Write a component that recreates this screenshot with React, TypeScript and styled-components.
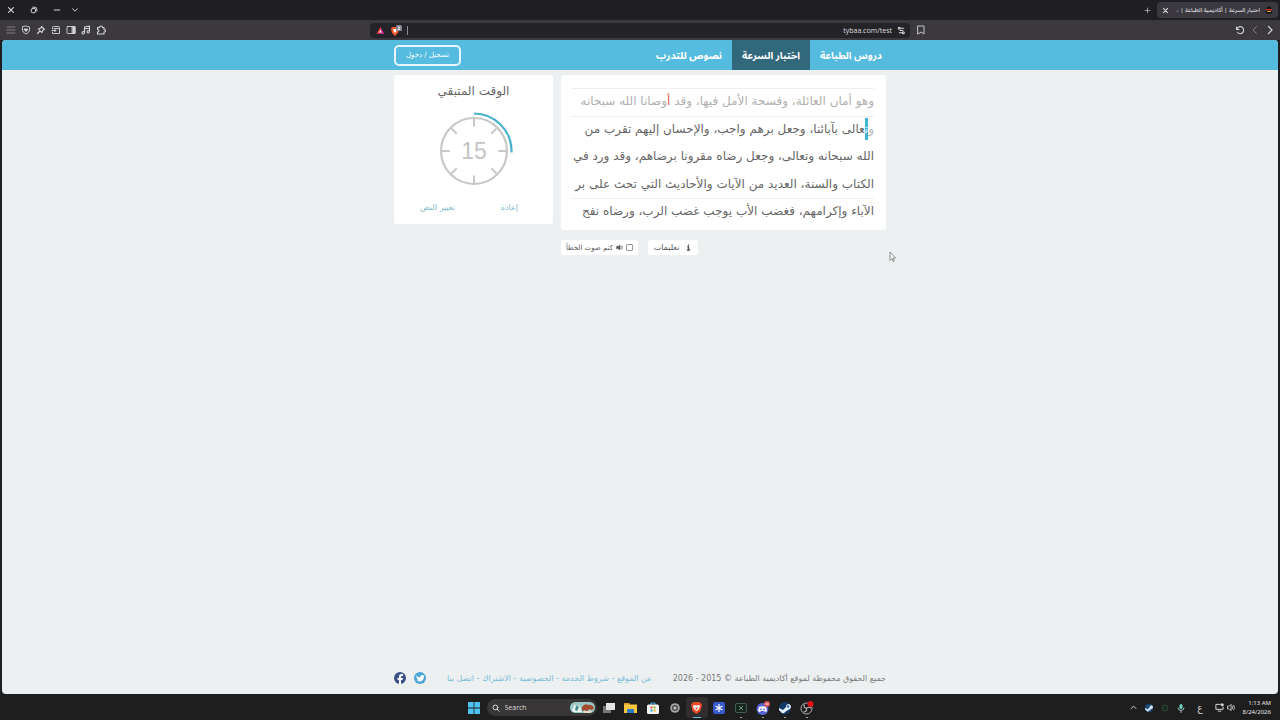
import React from "react";
import styled, { createGlobalStyle, css } from "styled-components";

const sans = `"Liberation Sans", "DejaVu Sans", sans-serif`;
const arabic = `"Noto Sans Arabic", "Noto Kufi Arabic", "Noto Sans", "DejaVu Sans", sans-serif`;
const kufi = `"DejaVu Sans", sans-serif`;

const GlobalStyle = createGlobalStyle`
  * { box-sizing: border-box; }
  html, body { margin: 0; background: #1f1e23; }
  body { font-family: ${sans}; font-size: 8px; color: #6c6c6c; }
  button, input { font: inherit; color: inherit; background: none; border: 0; padding: 0; margin: 0; }
  a { text-decoration: none; color: inherit; }
  svg { display: block; flex: none; }
`;

const Screen = styled.div`
  min-height: 100vh;
  display: flex;
  flex-direction: column;
  position: relative;
`;

const TitleBar = styled.div`
  height: 20px;
  display: flex;
  align-items: center;
  justify-content: space-between;
  background: #1f1e23;
  color: #d4d4d6;
`;

const WindowControls = styled.div`
  display: flex;
  padding-left: 1px;
`;

const ControlButton = styled.button<{ $w?: number }>`
  display: flex;
  align-items: center;
  justify-content: center;
  width: ${(p) => p.$w ?? 20}px;
  height: 20px;
`;

const TabStrip = styled.div`
  display: flex;
  align-items: center;
  padding-right: 2px;
`;

const Tab = styled.div`
  display: flex;
  align-items: center;
  gap: 5px;
  width: 121px;
  height: 16px;
  padding: 0 5px;
  border-radius: 4px;
  background: #3b393f;
`;

const TabTitle = styled.span`
  flex: 1;
  min-width: 0;
  white-space: nowrap;
  direction: rtl;
  font: 6px/14px ${arabic};
  color: #ededee;
`;

const Faded = styled.span`
  color: #8d8c91;
`;

const Toolbar = styled.div`
  height: 20px;
  display: grid;
  grid-template-columns: 1fr minmax(0, 540px) 1fr;
  align-items: center;
  background: #3b393e;
  color: #d4d4d6;
`;

const ToolGroup = styled.div<{ $spread?: boolean }>`
  display: flex;
  align-items: center;
  padding: 0 3px;
  ${(p) => p.$spread && css`justify-content: space-between;`}
`;

const History = styled.div`
  display: flex;
`;

const Tool = styled.button<{ $dim?: boolean }>`
  display: flex;
  align-items: center;
  justify-content: center;
  width: 15px;
  height: 16px;
  opacity: ${(p) => (p.$dim ? 0.5 : 1)};
`;

const AddressBar = styled.div`
  display: flex;
  align-items: center;
  gap: 5px;
  height: 15px;
  padding: 0 4px 0 6px;
  border-radius: 4px;
  background: #242328;
`;

const AddressInput = styled.input`
  flex: 1;
  min-width: 0;
  height: 9px;
  border-left: 1px solid #8b8a90;
  text-align: right;
  font: 7px/9px "Open Sans", ${sans};
  color: #dededf;
  outline: none;
`;

const Page = styled.div`
  flex: 1;
  display: flex;
  flex-direction: column;
  margin: 0 2px 1px;
  border-radius: 4px;
  overflow: hidden;
  background: #ecf0f1;
  font-family: ${kufi};
`;

const SiteHeader = styled.header`
  background: #55bcdf;
`;

const Container = styled.div`
  width: 100%;
  max-width: 492px;
  margin: 0 auto;
  display: flex;
  justify-content: space-between;
`;

const HeaderRow = styled(Container)`
  height: 30px;
  align-items: center;
`;

const LoginButton = styled.button`
  width: 67px;
  height: 21px;
  border: 2px solid #e6f6fc;
  border-radius: 5px;
  font-size: 7px;
  line-height: 15px;
  color: #fff;
`;

const Nav = styled.nav`
  display: flex;
  direction: rtl;
`;

const NavLink = styled.a<{ $active?: boolean }>`
  display: flex;
  align-items: center;
  justify-content: center;
  height: 30px;
  padding: 0 10px;
  font-family: ${arabic};
  font-size: 10px;
  font-weight: 700;
  white-space: nowrap;
  color: #fff;
  background: ${(p) => (p.$active ? "#32687c" : "none")};
  &:first-child { padding-right: 4px; }
`;

const Main = styled(Container)`
  padding-top: 5px;
  gap: 8px;
  align-items: flex-start;
`;

const TimerCard = styled.section`
  flex: none;
  width: 159px;
  height: 149px;
  display: flex;
  flex-direction: column;
  align-items: center;
  background: #fff;
  border-radius: 3px;
`;

const TimerTitle = styled.h2`
  margin: 0;
  padding-top: 4px;
  font-size: 12px;
  line-height: 24px;
  font-weight: 400;
  color: #666;
`;

const Dial = styled.svg`
  margin-top: 8px;
`;

const TimerActions = styled.div`
  width: 100%;
  display: flex;
  justify-content: space-between;
  padding: 10px 35px 0 26px;
`;

const TextButton = styled.button`
  font-size: 8px;
  line-height: 14px;
  color: #7cb9cb;
`;

const Column = styled.div`
  flex: 1;
  min-width: 0;
  direction: rtl;
`;

const TextCard = styled.section`
  height: 155px;
  padding: 13px 12px 4px 10px;
  background: #fff;
  border-radius: 3px;
`;

const Lines = styled.div`
  display: grid;
  grid-auto-rows: 1fr;
  height: 138px;
`;

const Line = styled.p<{ $rule?: boolean; $done?: boolean }>`
  margin: 0;
  border-top: 1px solid ${(p) => (p.$rule ? "#efefef" : "transparent")};
  font-size: 12px;
  line-height: 25px;
  white-space: nowrap;
  color: ${(p) => (p.$done ? "#b0b0b0" : "#666")};
`;

const Typed = styled.span`
  color: #b8b8b8;
`;
const Wrong = styled.span`
  color: #d9534f;
`;
const Current = styled.span`
  padding: 4px 0;
  color: #fff;
  background: #3fb4d4;
`;

const OptionRow = styled.div`
  display: flex;
  direction: ltr;
  gap: 10px;
  padding-top: 10px;
`;

const Chip = styled.label<{ $w: number }>`
  width: ${(p) => p.$w}px;
  height: 15px;
  display: flex;
  align-items: center;
  justify-content: center;
  gap: 3px;
  direction: rtl;
  white-space: nowrap;
  background: #fff;
  border-radius: 2px;
  font-size: 7px;
  line-height: 14px;
  color: #555;
`;

const InfoChip = styled(Chip)`
  gap: 6px;
  font-size: 8px;
`;

const Checkbox = styled.input`
  appearance: none;
  width: 7px;
  height: 7px;
  border: 1px solid #999;
  border-radius: 1px;
  background: #fff;
`;

const SiteFooter = styled.footer`
  margin-top: auto;
  padding-bottom: 7px;
`;

const FooterRow = styled(Container)`
  align-items: center;
  height: 18px;
  font-size: 8px;
`;

const Social = styled.div`
  display: flex;
  gap: 8px;
`;

const FooterLinks = styled.div`
  direction: rtl;
  white-space: nowrap;
  color: #79bcd6;
`;

const Copyright = styled.div`
  direction: rtl;
  white-space: nowrap;
  color: #7a7a7a;
`;

const TaskBar = styled.div`
  height: 25px;
  display: grid;
  grid-template-columns: 1fr auto 1fr;
  align-items: center;
  background: #1f1e1f;
  color: #e8e8e8;
`;

const Apps = styled.div`
  grid-column: 2;
  display: flex;
  align-items: center;
`;

const AppButton = styled.button<{ $active?: boolean; $open?: boolean }>`
  width: 22px;
  height: 21px;
  position: relative;
  display: flex;
  align-items: center;
  justify-content: center;
  border-radius: 3px;
  background: ${(p) => (p.$active ? "#302d2c" : "none")};
  ${(p) =>
    (p.$open || p.$active) &&
    css`
      &::after {
        content: "";
        position: absolute;
        bottom: 0;
        width: ${p.$active ? 8 : 2}px;
        height: 1px;
        background: ${p.$active ? "#6cc0e6" : "#a0a0a0"};
      }
    `}
`;

const Search = styled.label`
  width: 110px;
  height: 17px;
  margin: 0 1px 0 2px;
  display: flex;
  align-items: center;
  gap: 5px;
  padding: 0 2px 0 5px;
  border-radius: 9px;
  background: #383637;
`;

const SearchInput = styled.input`
  flex: 1;
  min-width: 0;
  font: 7px/12px "Open Sans", ${sans};
  &::placeholder { color: #d8d8d8; opacity: 1; }
`;

const Tray = styled.div`
  grid-column: 3;
  display: flex;
  justify-content: flex-end;
  align-items: center;
  padding-right: 9px;
`;

const TrayItem = styled.span<{ $w?: number }>`
  width: ${(p) => p.$w ?? 16}px;
  display: flex;
  justify-content: center;
  font: 9px/14px ${arabic};
`;

const Time = styled.time`
  width: 36px;
  text-align: right;
  white-space: nowrap;
  font: 6px/9px "Noto Sans", ${sans};
`;

const Pointer = styled.svg`
  position: absolute;
  left: 889px;
  top: 251px;
`;

function Ico({ size = 10, children, fill = "none", sw = 1.8 }: { size?: number; children: React.ReactNode; fill?: string; sw?: number }) {
  return (
    <svg width={size} height={size} viewBox="0 0 20 20" fill={fill} stroke="currentColor" strokeWidth={sw} strokeLinecap="round" strokeLinejoin="round" aria-hidden="true">
      {children}
    </svg>
  );
}

const Close = ({ size = 8 }) => <Ico size={size} sw={3}><path d="M4 4l12 12M16 4L4 16" /></Ico>;

function TimerDial({ seconds }: { seconds: number }) {
  return (
    <Dial width="80" height="80" viewBox="-40 -40 80 80" role="img" aria-label={String(seconds)}>
      <circle r="33" fill="none" stroke="#c8c8c8" strokeWidth="2.2" />
      {[0, 45, 90, 135, 180, 225, 270, 315].map((a) => (
        <path key={a} d="M0-32V-24.500" stroke="#c8c8c8" strokeWidth="2" transform={`rotate(${a})`} />
      ))}
      <path d="M0-37.500A37.500 37.500 0 0 1 37.500 0V1.500" fill="none" stroke="#48b2cf" strokeWidth="2.200" />
      <text y="8" textAnchor="middle" fontFamily="Liberation Sans" fontSize="23" fill="#c4c4c4">{seconds}</text>
    </Dial>
  );
}

export default function App() {
  return (
    <Screen>
      <GlobalStyle />
      <TitleBar>
        <WindowControls>
          <ControlButton aria-label="Close"><Close /></ControlButton>
          <ControlButton $w={26} aria-label="Restore"><Ico size={8} sw={2.5}><rect x="3" y="6" width="11" height="11" rx="4" /><path d="M7 3h5q5 0 5 5v5" /></Ico></ControlButton>
          <ControlButton aria-label="Minimize"><Ico size={8} sw={2.5}><path d="M3 10h14" /></Ico></ControlButton>
          <ControlButton $w={16} aria-label="Tabs"><Ico size={8} sw={2.5}><path d="M4 7l6 6 6-6" /></Ico></ControlButton>
        </WindowControls>
        <TabStrip>
          <ControlButton aria-label="New tab"><Ico size={7} sw={1.8}><path d="M10 3v14M3 10h14" /></Ico></ControlButton>
          <Tab>
            <Close size={7} />
            <TabTitle>اختبار السرعة | أكاديمية الطباعة | <Faded>د</Faded></TabTitle>
            <svg width="8" height="8" viewBox="0 0 8 8"><circle cx="4" cy="3.200" r="2.600" fill="#161212" /><path d="M1 3h6v1.400H1z" fill="#c63a2c" /><path d="M0.500 5h7L6.500 7.500h-5z" fill="#0d0b0b" /><path d="M2 5h4v1H2z" fill="#dd9b36" /></svg>
          </Tab>
        </TabStrip>
      </TitleBar>

      <Toolbar>
        <ToolGroup>
          <Tool $dim aria-label="Menu"><Ico><path d="M2 4h16M2 10h16M2 16h16" /></Ico></Tool>
          <Tool aria-label="Shields"><Ico><path d="M10 2l7 2v6q0 5-7 8-7-3-7-8V4z" /><path d="M7 8h6l-1 3-2 2-2-2z" fill="currentColor" /></Ico></Tool>
          <Tool aria-label="Pin"><Ico sw={2.200}><path d="M11 3l6 6-3 1-2 5-4-3-3-4 5-2zM8 12l-5 5" /></Ico></Tool>
          <Tool aria-label="Wallet"><Ico><path d="M3 8V5q0-2 2-2h11l1 2v12H3v-3M6 7h11M2 11h8M8 8.500v5" /></Ico></Tool>
          <Tool aria-label="Sidebar"><Ico><rect x="2" y="3" width="16" height="14" rx="1" /><path d="M13 3h5v14h-5z" fill="currentColor" /></Ico></Tool>
          <Tool aria-label="Media"><Ico sw={2.200}><path d="M7 15V4l10-2v11M7 8l10-2" /><circle cx="4.500" cy="15.500" r="2.500" /><circle cx="14.500" cy="13.500" r="2.500" /></Ico></Tool>
          <Tool aria-label="Extensions"><Ico sw={2.200}><path d="M3 5h4q0-3 3-3t3 3h3v4q3 0 3 2.500T16 14v4H3v-4q3 0 3-2.500T3 9z" /></Ico></Tool>
        </ToolGroup>
        <AddressBar>
          <svg width="9" height="9" viewBox="0 0 9 9"><path d="M4.500 1L8.500 8h-8z" fill="#c02a86" /><path d="M4.500 1L.5 8l4-2z" fill="#f04b24" /><path d="M4.500 3.800l1.400 2.600H3.100z" fill="#fff" /></svg>
          <svg width="12" height="11" viewBox="0 0 12 11"><path d="M2 2h6l1 2-1 4-3 3-3-3-1-4z" fill="#f4562d" /><path d="M3 4h4L6 7 5 8 4 7z" fill="#fff" /><rect x="6" y="0" width="6" height="6" rx="1.500" fill="#868b96" /><path d="M8 2h1.500v1L8 4.500h2" stroke="#fff" strokeWidth=".7" fill="none" /></svg>
          <AddressInput aria-label="Address" defaultValue="tybaa.com/test" />
          <Ico size={9} sw={2.400}><path d="M8 5h7M5 15h6" /><circle cx="5" cy="5" r="2.200" /><circle cx="14" cy="15" r="2.200" /><path d="M7 10h6" /></Ico>
        </AddressBar>
        <ToolGroup $spread>
          <Tool aria-label="Bookmark"><Ico><path d="M4 2h12v16l-6-4-6 4z" /></Ico></Tool>
          <History>
            <Tool aria-label="Reload"><Ico sw={2.200}><path d="M3 4v5h5M3.500 8.500A7 7 0 1 1 5 15" /></Ico></Tool>
            <Tool $dim aria-label="Back"><Ico><path d="M13 3l-7 7 7 7" /></Ico></Tool>
            <Tool aria-label="Forward"><Ico sw={2.400}><path d="M7 3l7 7-7 7" /></Ico></Tool>
          </History>
        </ToolGroup>
      </Toolbar>

      <Page>
        <SiteHeader>
          <HeaderRow>
            <LoginButton>تسجيل / دخول</LoginButton>
            <Nav>
              <NavLink href="#lessons">دروس الطباعة</NavLink>
              <NavLink href="#test" $active>اختبار السرعة</NavLink>
              <NavLink href="#texts">نصوص للتدرب</NavLink>
            </Nav>
          </HeaderRow>
        </SiteHeader>

        <Main as="main">
          <TimerCard>
            <TimerTitle>الوقت المتبقي</TimerTitle>
            <TimerDial seconds={15} />
            <TimerActions>
              <TextButton>تغيير النص</TextButton>
              <TextButton>إعادة</TextButton>
            </TimerActions>
          </TimerCard>
          <Column>
            <TextCard>
              <Lines>
                <Line $rule $done>وهو أمان العائلة، وفسحة الأمل فيها، وقد <Wrong>أ</Wrong>وصانا الله سبحانه</Line>
                <Line $rule><Typed>و</Typed><Current>ت</Current>عالى بآبائنا، وجعل برهم واجب، والإحسان إليهم تقرب من</Line>
                <Line>الله سبحانه وتعالى، وجعل رضاه مقرونا برضاهم، وقد ورد في</Line>
                <Line>الكتاب والسنة، العديد من الآيات والأحاديث التي تحث على بر</Line>
                <Line $rule>الآباء وإكرامهم، فغضب الأب يوجب غضب الرب، ورضاه نفح</Line>
              </Lines>
            </TextCard>
            <OptionRow>
              <Chip $w={77}>
                <Checkbox type="checkbox" />
                <Ico size={7} fill="currentColor"><path d="M2 7h4l5-4v14l-5-4H2z" /><path d="M14 7q2 3 0 6M17 5q4 5 0 10" fill="none" /></Ico>
                كتم صوت الخطأ
              </Chip>
              <InfoChip as="button" $w={50}>
                <Ico size={7} sw={4}><path d="M10 2.500v.5M8 8h2v9M7 17h6" /></Ico>
                تعليمات
              </InfoChip>
            </OptionRow>
          </Column>
        </Main>

        <SiteFooter>
          <FooterRow>
            <Social>
              <a href="#facebook" aria-label="Facebook"><svg width="12" height="12" viewBox="0 0 24 24"><circle cx="12" cy="12" r="12" fill="#3b5088" /><path d="M10 24v-8H7v-4h3V9q0-5 5-5h3v4h-2q-2 0-2 2v2h4l-1 4h-3v8z" fill="#fff" /></svg></a>
              <a href="#twitter" aria-label="Twitter"><svg width="12" height="12" viewBox="0 0 24 24"><circle cx="12" cy="12" r="12" fill="#4ba4d8" /><path d="M5 7q3 4 7 4 0-5 4-5 2 0 3 1l2-1-1 3q-1 10-9 10-4 0-6-2 3 0 4-1-3-1-3-3-2-2-1-6z" fill="#fff" /></svg></a>
            </Social>
            <FooterLinks>
              <a href="#about">عن الموقع</a> - <a href="#terms">شروط الخدمة</a> - <a href="#privacy">الخصوصية</a> - <a href="#subscribe">الاشتراك</a> - <a href="#contact">اتصل بنا</a>
            </FooterLinks>
            <Copyright>جميع الحقوق محفوظة لموقع أكاديمية الطباعة © 2015 - 2026</Copyright>
          </FooterRow>
        </SiteFooter>
      </Page>

      <TaskBar>
        <Apps>
          <AppButton aria-label="Start"><svg width="12" height="12" viewBox="0 0 12 12"><path d="M0 0h5.600v5.600H0zM6.400 0H12v5.600H6.400zM0 6.400h5.600V12H0zM6.400 6.400H12V12H6.400z" fill="#4fc3f0" /></svg></AppButton>
          <Search>
            <Ico size={8} sw={2.200}><circle cx="8.500" cy="8.500" r="6" /><path d="M13 13l5 5" /></Ico>
            <SearchInput placeholder="Search" aria-label="Search" />
            <svg width="25" height="13" viewBox="0 0 25 13"><rect y="1" width="25" height="11" rx="5.500" fill="#9cc9c6" /><path d="M2 9l3-6 2 5 2-4 3 7H3z" fill="#e9f4f0" /><path d="M6 5l3 1-2 4-2-1z" fill="#3c8a86" /><path d="M12 6q3-4 6-2 4-1 6 3l-2 2-3-1-2 3-2-2-3 1z" fill="#a34a2c" /><path d="M14 10h8l-2 2h-6z" fill="#e6d9c6" /></svg>
          </Search>
          <AppButton aria-label="Task view"><svg width="12" height="12" viewBox="0 0 12 12"><rect x="0" y="4" width="8" height="7" fill="#77777a" /><rect x="3" y="1" width="9" height="7" fill="#e4e4e4" /></svg></AppButton>
          <AppButton aria-label="Files"><svg width="13" height="12" viewBox="0 0 13 12"><path d="M0 1h5l1 1.500h7V11H0z" fill="#f9c63d" /><path d="M0 1h5l1 1.500H0z" fill="#e0962a" /><path d="M3 11V8q0-1 1-1h5q1 0 1 1v3z" fill="#2b7cc4" /></svg></AppButton>
          <AppButton aria-label="Store"><svg width="12" height="12" viewBox="0 0 12 12"><path d="M4 3V1h4v2" fill="none" stroke="#4cb4e8" /><rect y="2.500" width="12" height="9.500" rx="1.500" fill="#f3f3f3" /><path d="M3.500 4.500h2v2h-2z" fill="#e9532b" /><path d="M6.500 4.500h2v2h-2z" fill="#7cb32e" /><path d="M3.500 7.500h2v2h-2z" fill="#2aa0dd" /><path d="M6.500 7.500h2v2h-2z" fill="#f2b61f" /></svg></AppButton>
          <AppButton aria-label="Camera"><svg width="10" height="10" viewBox="0 0 10 10"><circle cx="5" cy="5" r="4.800" fill="#a5a5a5" /><circle cx="5" cy="5" r="3" fill="#4c4c4c" /><circle cx="5" cy="5" r="1.500" fill="#c9c9c9" /></svg></AppButton>
          <AppButton $active aria-label="Brave"><svg width="11" height="12" viewBox="0 0 11 12"><path d="M2.500 0h6L11 2.500 9.500 9l-4 3-4-3L0 2.500z" fill="#f04a2a" /><path d="M2.500 3l3 .5 3-.5.5 1.500-1.500 3L5.500 9 3.500 7.500 2 4.500z" fill="#fff" /><path d="M4 5.500h3L5.500 8z" fill="#f04a2a" /></svg></AppButton>
          <AppButton aria-label="Notes"><svg width="12" height="12" viewBox="0 0 12 12"><rect width="12" height="12" rx="2" fill="#3657ce" /><path d="M6 2v8M2.500 4l7 4M9.500 4l-7 4" stroke="#fff" strokeWidth="1.200" /></svg></AppButton>
          <AppButton $open aria-label="Xbox tools"><svg width="12" height="10" viewBox="0 0 12 10"><rect x=".5" y=".5" width="11" height="9" rx="1.500" fill="#17251f" stroke="#3d604f" /><path d="M4 3l4 4M8 3L4 7" stroke="#6a9480" /></svg></AppButton>
          <AppButton $open aria-label="Discord"><svg width="14" height="14" viewBox="0 0 14 14"><circle cx="6.500" cy="8" r="6" fill="#5865d8" /><path d="M3 6q3.500-1.500 7 0l1 4q-1 1-2 1l-.8-1H4.800L4 11q-1 0-2-1z" fill="#fff" /><circle cx="5" cy="8.300" r=".9" fill="#5865d8" /><circle cx="8" cy="8.300" r=".9" fill="#5865d8" /><circle cx="11" cy="3" r="3" fill="#e0545c" /><path d="M9.500 3h3" stroke="#fff" /></svg></AppButton>
          <AppButton $open aria-label="Steam"><svg width="12" height="12" viewBox="0 0 12 12"><circle cx="6" cy="6" r="6" fill="#123a66" /><path d="M0 6l4 2 3-3q0-3 3-3 2 1 2 3 0 2-3 3l-3 2q-1 2-3 1L0 8z" fill="#e4f0fa" /><circle cx="9" cy="4.500" r="1.200" fill="#2d6aa2" /></svg></AppButton>
          <AppButton $open aria-label="OBS"><svg width="14" height="14" viewBox="0 0 14 14"><circle cx="6.500" cy="7.500" r="5.500" fill="#1d1d1d" stroke="#b4b4b4" /><path d="M6.500 7.500Q3 6.500 4.500 3.500M6.500 7.500q2.500-2.500 4.500 0M6.500 7.500q.5 3.500-3 3.500" fill="none" stroke="#b4b4b4" strokeWidth="1.200" /><circle cx="10.500" cy="3" r="3" fill="#e21317" /></svg></AppButton>
        </Apps>
        <Tray>
          <TrayItem><Ico size={7} sw={2.500}><path d="M3 13l7-7 7 7" /></Ico></TrayItem>
          <TrayItem><svg width="8" height="8" viewBox="0 0 12 12"><circle cx="6" cy="6" r="6" fill="#1d4877" /><path d="M0 6l4 2 3-3q0-3 3-3 2 1 2 3 0 2-3 3l-3 2q-1 2-3 1L0 8z" fill="#cfe3f6" /></svg></TrayItem>
          <TrayItem><svg width="8" height="8" viewBox="0 0 8 8"><circle cx="4" cy="4" r="3" fill="#1b2b21" stroke="#31483a" /></svg></TrayItem>
          <TrayItem><svg width="8" height="10" viewBox="0 0 8 10"><rect x="2.500" y="1" width="3" height="5" rx="1.500" fill="#6fd0c0" /><path d="M1 4.500q0 3 3 3t3-3M4 7.500V10" fill="none" stroke="#b7dcd6" strokeWidth=".8" /></svg></TrayItem>
          <TrayItem $w={22}>ع</TrayItem>
          <TrayItem><Ico size={9} sw={2}><path d="M12 3H2v11h16V9M7 18h6" /><path d="M15 2h3v4h-3z" fill="currentColor" /></Ico></TrayItem>
          <TrayItem $w={8}><Ico size={9} sw={1.700}><path d="M2 7h3l4-4v14l-4-4H2zM12 7q2 3 0 6M15 5q4 5 0 10" /></Ico></TrayItem>
          <Time>1:13 AM<br />8/24/2026</Time>
        </Tray>
      </TaskBar>
      <Pointer width="7" height="12" viewBox="0 0 7 12" aria-hidden="true"><path d="M1 1v8.500l2-2 1.200 3 1.200-.5-1.200-3h2.300z" fill="#f8f8f8" stroke="#777" strokeWidth=".8" /></Pointer>
    </Screen>
  );
}
